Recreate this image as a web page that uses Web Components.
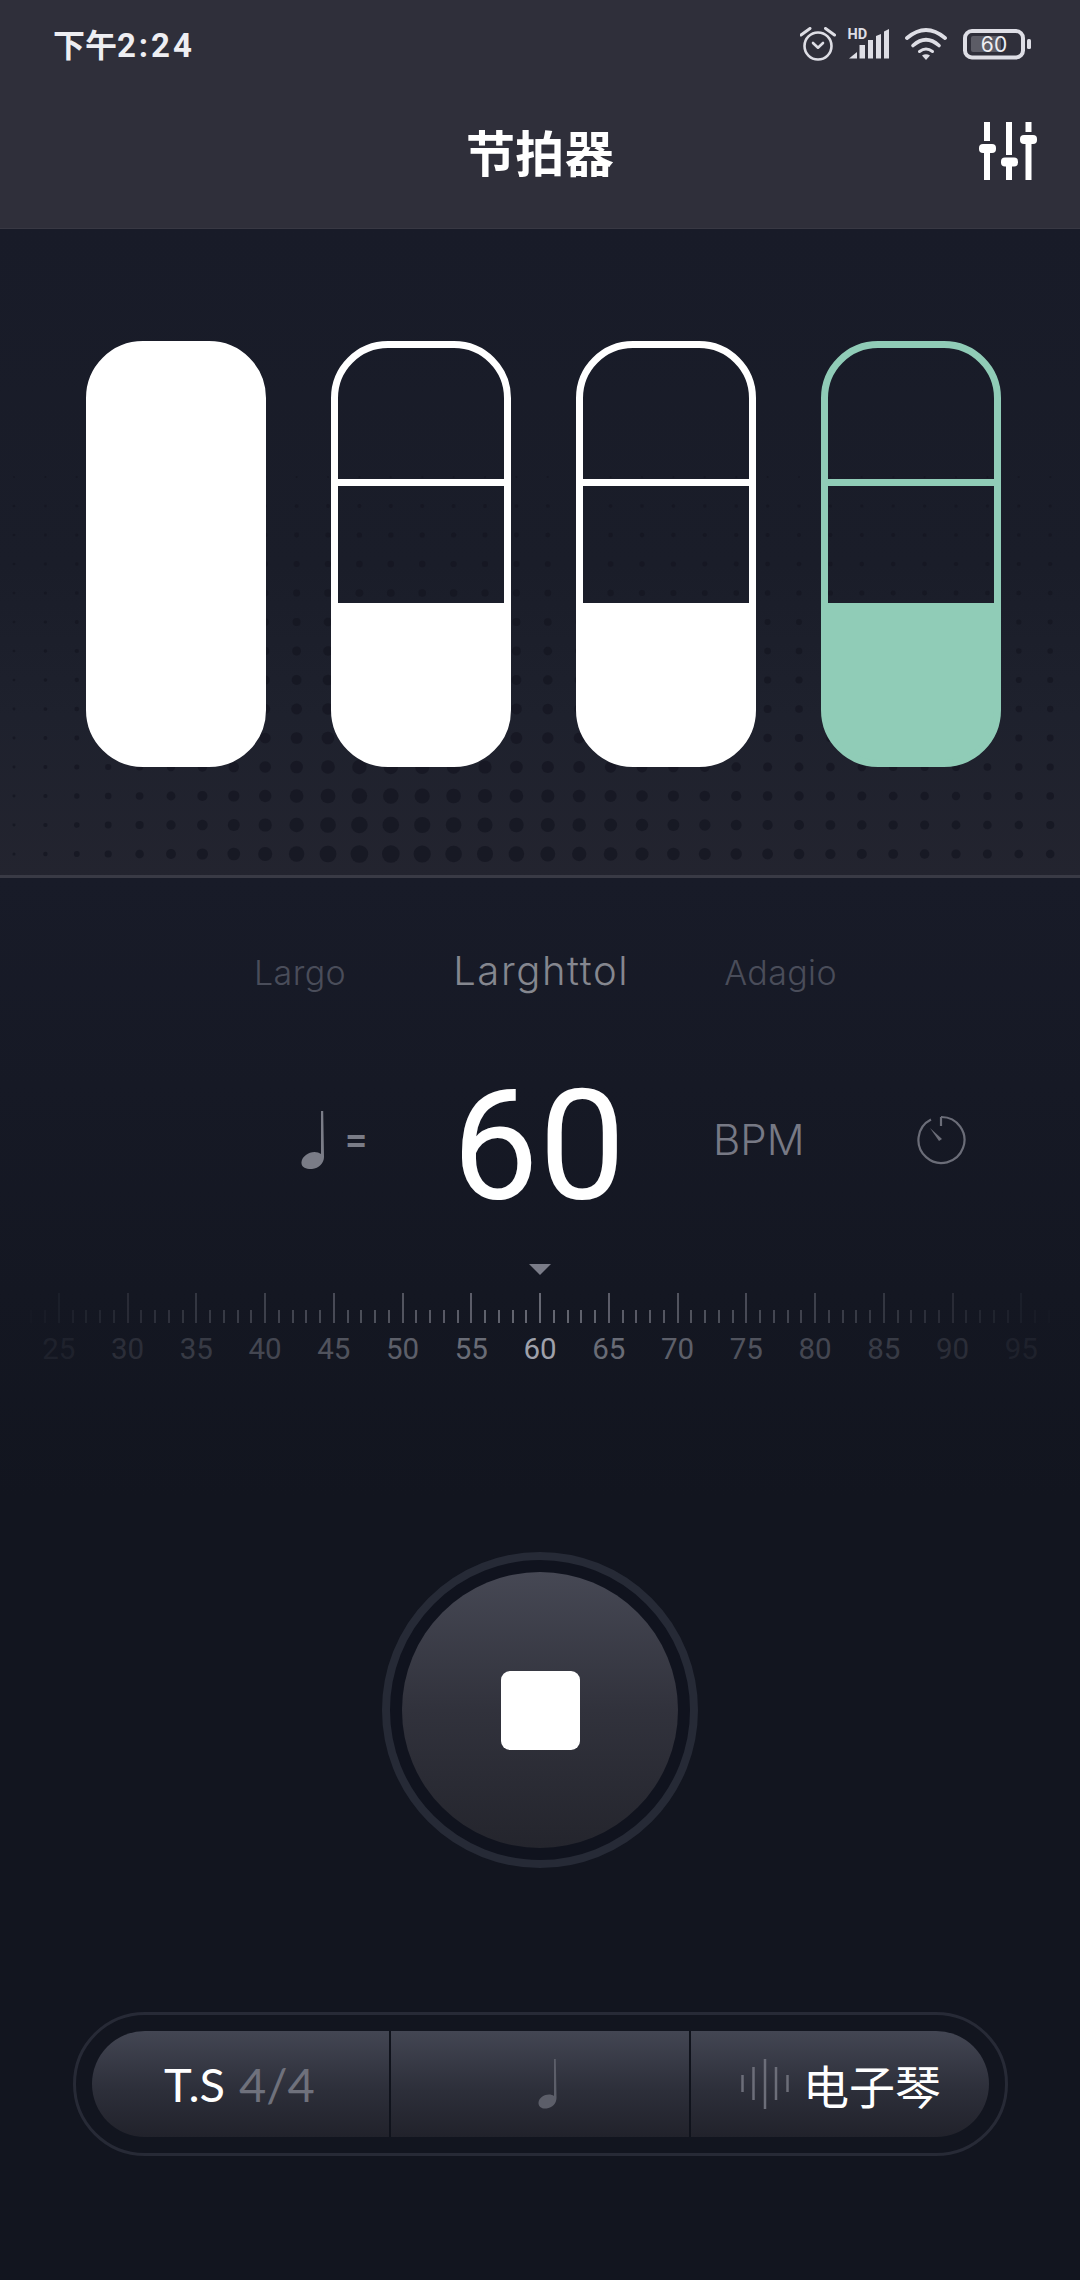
<!DOCTYPE html>
<html lang="zh"><head><meta charset="utf-8"><title>节拍器</title>
<style>
html,body{margin:0;padding:0;background:#12151f}
body{width:1080px;height:2280px;overflow:hidden;font-family:"Inter","Noto Sans CJK SC",sans-serif;color:#fff}
metronome-app{display:flex;flex-direction:column;width:1080px;height:2280px}
</style></head><body>
<metronome-app>
  <app-header></app-header>
  <beat-panel>
    <beat-bar full></beat-bar>
    <beat-bar></beat-bar>
    <beat-bar></beat-bar>
    <beat-bar accent></beat-bar>
  </beat-panel>
  <tempo-panel></tempo-panel>
  <stop-button></stop-button>
  <bottom-pill></bottom-pill>
</metronome-app>
<script>
const mk=(name,html,init)=>{customElements.define(name,class extends HTMLElement{
  constructor(){super();const r=this.attachShadow({mode:'open'});r.innerHTML=html;if(init)init(r,this)}
})};
const LAT='"Lato","Noto Sans CJK SC",sans-serif', INT='"Inter","Noto Sans CJK SC",sans-serif', ROB='Roboto,"Noto Sans CJK SC",sans-serif', CJK='"Noto Sans CJK SC",sans-serif';

mk('metronome-app',`<style>:host{display:flex;flex-direction:column;width:1080px;height:2280px;background:linear-gradient(#181b28 880px,#12151f 1500px,#12151f)}</style><slot></slot>`);

mk('app-header',`<style>
:host{display:block;height:229px;background:#2f2f3a;box-shadow:inset 0 -3px 0 -2px #383843;flex:none}
.status{display:flex;justify-content:space-between;align-items:center;padding:27px 45px 0 53px;height:35px}
.time{font:700 32px/35px ${CJK};color:#eeeef2;white-space:nowrap}
.time b{font:700 33px/35px Roboto,sans-serif;letter-spacing:2.9px}
.bar{display:grid;grid-template-columns:1fr auto 1fr;align-items:center;margin-top:60px;padding:0 43px;height:58px}
h1{grid-column:2;margin:0;font:700 49px/58px ${CJK};color:#fff;letter-spacing:.4px}
.sl{grid-column:3;justify-self:end;display:block}
svg{display:block}
</style>
<div class="status"><div class="time">下午<b>2:24</b></div>
<svg width="235" height="35" viewBox="800 27 235 35" fill="none" stroke="#dedee5">
 <circle cx="818" cy="46" r="13.5" stroke-width="2.6"/>
 <path d="M801 35l9-6.5M825.500 28.500l9 6.500" stroke-width="3" stroke-linecap="round"/>
 <path d="M813 43l5 4.700 5-4.700" stroke-width="2.600" stroke-linecap="round" stroke-linejoin="round"/>
 <text x="847.500" y="38.500" fill="#dedee5" stroke="none" font-family="Roboto" font-weight="700" font-size="14.500">HD</text>
 <g fill="#dedee5" stroke="none">
  <path d="M849 58.500l8-6.500v6.500z"/>
  <rect x="859.500" y="45" width="5.500" height="13.500"/>
  <rect x="868" y="40" width="5" height="18.500"/>
  <path d="M876 36l5-2v24.500h-5z"/>
  <path d="M884 31.500l5-2.500v29.500h-5z"/>
 </g>
 <path d="M907 38Q926 22 945 38" stroke-width="3.800" stroke-linecap="round"/>
 <path d="M913 45.500Q926 34 939 45.500" stroke-width="3.600" stroke-linecap="round"/>
 <path d="M919.500 51.500Q926 46.500 932.500 51.500" stroke-width="3" stroke-linecap="round"/>
 <path d="M922 55.500q4-2.500 8 0l-4 4.500z" fill="#dedee5" stroke="none"/>
 <rect x="971" y="36" width="30" height="16" rx="2" fill="#5c5c66" stroke="none"/>
 <rect x="965" y="31" width="58" height="26.500" rx="7" stroke-width="4"/>
 <rect x="1027" y="39" width="4" height="10" rx="1.500" fill="#dedee5" stroke="none"/>
 <text x="994" y="52" text-anchor="middle" fill="#eeeef2" stroke="none" font-family="Inter" font-size="21">60</text>
</svg></div>
<div class="bar"><h1>节拍器</h1>
<svg class="sl" width="58" height="58" viewBox="979 122 58 58" fill="#fff">
 <rect x="984" y="122" width="6" height="19"/><rect x="979" y="144" width="17" height="9" rx="4"/><rect x="984" y="153" width="6" height="27"/>
 <rect x="1006" y="122" width="6" height="33"/><rect x="1001" y="157.500" width="17" height="9" rx="4"/><rect x="1006" y="166" width="6" height="14"/>
 <rect x="1025.500" y="122" width="6" height="10"/><rect x="1020" y="135" width="17" height="9" rx="4"/><rect x="1025.500" y="144" width="6" height="36"/>
</svg></div>`);

mk('beat-panel',`<style>
:host{display:block;position:relative;height:649px;flex:none;background:linear-gradient(#181b28 0,#1a1d29 52%,#1e212d 75%,#23242f 100%);box-shadow:inset 0 -3px 0 0 #393a45}
.dots{position:absolute;left:0;top:0}
.row{position:relative;display:flex;gap:65px;padding:112px 0 0 86px}
</style><svg class="dots" width="1080" height="647" viewBox="0 229 1080 647"></svg><div class="row"><slot></slot></div>`,
(r)=>{let s='';for(let row=0;row<14;row++){const y=477+29*row,f=row/13;
  for(let i=0;i<34;i++){const x=14+31.4*i;
   let h;
   if(x<400)h=Math.min(1,(x/540)*1.55);
   else if(x<767)h=1-(x-400)/367*.45;
   else h=.55-(x-767)/283*.15;
   const rad=1+7.6*Math.pow(f,.9)*h+(f>0?.2:0);
   s+=`<circle cx="${x.toFixed(1)}" cy="${y}" r="${rad.toFixed(2)}"/>`}}
 const d=r.querySelector('.dots');d.innerHTML=`<g fill="#151722" fill-opacity=".8">${s}</g>`});

mk('beat-bar',`<style>
:host{display:flex;flex-direction:column;box-sizing:border-box;width:180px;height:426px;border:7px solid var(--c);border-radius:57px;--c:#fff;flex:none;background:linear-gradient(transparent 262px,var(--c) 262px) border-box}
:host([accent]){--c:#90ccb7}
:host([full]){background:#fff}
.a{height:131px}.l{height:7px;background:var(--c)}
:host([full]) .l{display:none}
</style><div class="a"></div><div class="l"></div>`);

const TICK=[];for(let v=23;v<=97;v++)TICK.push(v);
mk('tempo-panel',`<style>
:host{display:block;flex:none;height:674px}
.names{display:flex;align-items:baseline;padding:67px 0 0 254px;height:52px;font-family:${INT};font-weight:300}
.names span{font-size:34px;line-height:52px;color:#4a4d5a;white-space:nowrap;letter-spacing:.4px}
.names .on{font-size:40px;font-weight:300;color:#85878f;letter-spacing:1.6px;margin:0 95px 0 107px}
.bpm{display:grid;grid-template-columns:157px 255px 203px 50px;align-items:start;margin-top:90px;padding-left:301px;height:125px}
.nt{display:flex;align-items:flex-start;gap:19px;height:125px}
.nt svg{margin-top:24px;flex:none}
.eq{font:600 36px/36px ${INT};color:#7a7c87;margin-top:33px}
.val{font:400 154px/125px ${ROB};color:#fff;margin:-3px 0 0 -6px;letter-spacing:.5px}
.unit{font:300 42px/42px ${INT};color:#777985;margin-top:32px}
.tm{margin-top:28px;display:block}
.arrow{width:0;height:0;border:11px solid transparent;border-bottom:0;border-top:11px solid #7a7c88;margin:52px auto 0}
.ticks{display:flex;justify-content:center;align-items:flex-end;height:30px;margin-top:18px}
.t{width:13.75px;display:flex;justify-content:center;flex:none}
.t i{display:block;width:2px;height:13px;background:#666873}
.t.m i{height:30px}
.labels{display:flex;justify-content:center;margin-top:4px}
.labels span{width:68.75px;flex:none;text-align:center;font:400 29.500px/44px ${ROB};color:#9fa1ab}
</style>
<div class="names"><span>Largo</span><span class="on">Larghttol</span><span>Adagio</span></div>
<div class="bpm"><div class="nt">
 <svg width="24" height="58" viewBox="0 0 24 58"><path d="M20 0h2.200l.8 46c0 6-5 11.500-12 12C4 58.500 0 55.500.5 51c.6-5.500 7-10 13-10 2.500 0 4.800.7 6.500 2z" fill="#7a7c87"/></svg>
 <div class="eq">=</div></div>
 <div class="val">60</div><div class="unit">BPM</div>
 <svg class="tm" width="50" height="50" viewBox="0 0 50 50" fill="none" stroke="#6b6d78"><path d="M15 4.500A23 23 0 1 0 25 2" stroke-width="2.200"/><path d="M25 2v9" stroke-width="2.200"/><path d="M14 13l9 13 3-2z" fill="#6b6d78" stroke="none"/></svg>
</div>
<div class="arrow"></div>
<div class="ticks"></div><div class="labels"></div>`,
(r)=>{const op=v=>Math.max(0,1-Math.abs(v-60)/37);
 r.querySelector('.ticks').innerHTML=TICK.map(v=>`<div class="t${v%5==0?' m':''}"><i style="opacity:${(0.03+.97*Math.pow(op(v),.9)).toFixed(2)}"></i></div>`).join('');
 let l='';for(let v=25;v<=95;v+=5){const d=Math.abs(v-60)/5;const o=v==60?1:Math.max(.05,.62-.09*(d-1));l+=`<span style="opacity:${o.toFixed(2)}">${v}</span>`}
 r.querySelector('.labels').innerHTML=l});

mk('stop-button',`<style>
:host{display:block;flex:none;box-sizing:border-box;width:316px;height:316px;margin:0 0 0 382px;border:8px solid #262a36;border-radius:50%;padding:12px;background:#10131e}
.d{width:276px;height:276px;border-radius:50%;background:linear-gradient(#464854,#31323c 50%,#24252d);display:flex;align-items:center;justify-content:center}
.s{width:79px;height:79px;border-radius:9px;background:#fff}
</style><div class="d"><div class="s"></div></div>`);

mk('bottom-pill',`<style>
:host{display:block;flex:none;box-sizing:border-box;width:935px;height:144px;margin:144px 0 0 73px;border:3px solid #272a36;border-radius:72px;padding:16px 16px}
.in{display:grid;grid-template-columns:297px 2px 298px 2px 299px;height:106px;border-radius:53px;overflow:hidden;background:linear-gradient(#434653,#2d2f3a 55%,#21222b)}
.dv{background:#10131c}
.c{display:flex;align-items:center;justify-content:flex-start}
.ts{padding-left:72px;font:400 47px/106px ${LAT};color:#fff;white-space:nowrap}
.ts em{font-style:normal;color:#6f717c;margin-left:14px}
.n{padding-left:147px}
.v{padding-left:50px;gap:14px}
.v span{font:400 46px/106px ${CJK};color:#fff;white-space:nowrap}
svg{display:block}
</style><div class="in">
 <div class="c ts">T.S<em>4/4</em></div><div class="dv"></div>
 <div class="c n"><svg width="19" height="50" viewBox="0 0 19 50"><path d="M16 0h1.800l.7 39c0 5-4 10-10 10.500C3.500 50 .2 47.500.5 43.500c.5-4.500 5.500-8 10.500-8 2 0 3.800.5 5 1.500z" fill="#5c5e69"/></svg></div><div class="dv"></div>
 <div class="c v"><svg width="48" height="50" viewBox="0 0 48 50" stroke="#6c6e79" stroke-width="2.500"><path d="M1.500 16v17M12.500 8v33M24 0v50M35 8v33M46.500 16v17"/></svg><span>电子琴</span></div>
</div>`);
</script>
</body></html>
